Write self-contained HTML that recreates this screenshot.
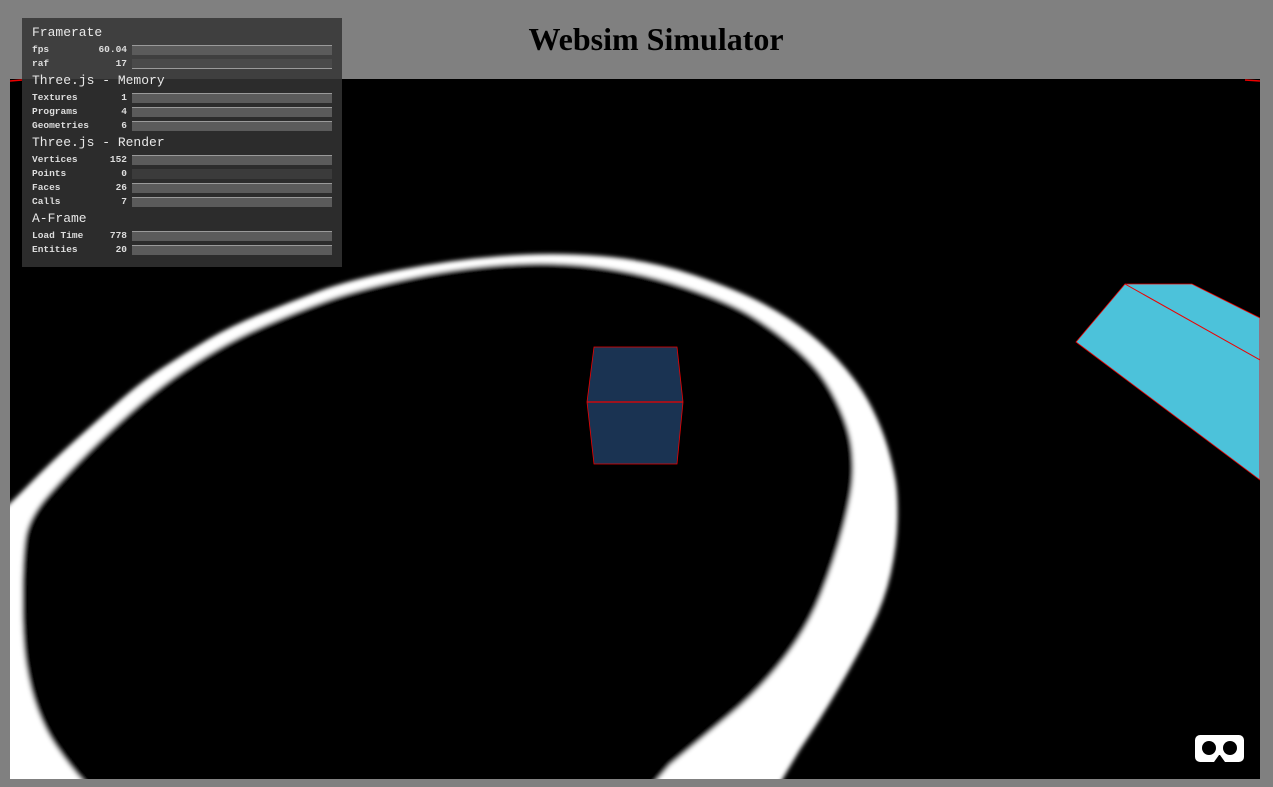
<!DOCTYPE html>
<html><head><meta charset="utf-8"><style>
html,body{margin:0;padding:0;width:1273px;height:787px;background:#808080;overflow:hidden;position:relative}
h1{position:absolute;left:0;width:1312px;top:20px;margin:0;text-align:center;font:bold 32px "Liberation Serif",serif;color:#000;line-height:38px}
#scene{position:absolute;left:0;top:0}
#stats{position:absolute;left:22px;top:18px;width:320px;height:249px;background:#2c2c2c;font-family:"Liberation Mono","Courier New",monospace;color:#ddd}
#stats .top{position:absolute;left:0;top:0;width:320px;height:61px;background:#3f3f3f}
.h{position:absolute;left:10px;font-size:13px;color:#e8e8e8}
.r{position:absolute;left:10px;width:310px;height:10px;font-size:9.5px;font-weight:bold;line-height:10px}
.r .l{position:absolute;left:0}
.r .v{position:absolute;right:215px}
.r .b{position:absolute;left:100px;width:200px;height:9px;top:0;background:#5b5b5b;border-top:1px solid #9a9a9a}
.r .b.d{background:#3b3b3b;border-top-color:#3b3b3b}
</style></head><body>
<svg id="scene" width="1273" height="787">
<rect x="10" y="79" width="1250" height="700" fill="#000"/>
<line x1="1245" y1="80" x2="1260" y2="81" stroke="#e00" stroke-width="1.5"/>
<line x1="10" y1="81" x2="22" y2="80" stroke="#e00" stroke-width="1.5"/>
<defs><clipPath id="c"><rect x="10" y="79" width="1250" height="700"/></clipPath>
<filter id="bl" x="-10%" y="-10%" width="120%" height="120%"><feGaussianBlur stdDeviation="2.2"/></filter></defs>
<g clip-path="url(#c)">
<g filter="url(#bl)">
<path fill="#fff" d="M-1,513 Q8,506 29.5,484 Q51,462 75.5,440 Q100,418 120.5,400 Q141,382 163,367.5 Q185,353 208,339.5 Q231,326 260.5,314 Q290,302 319.5,291 Q349,280 399.5,270 Q450,260 501,256 Q552,252 601,256 Q650,260 694,275 Q738,290 764,304 Q790,318 810,334 Q830,350 846,369 Q862,388 872,408 Q882,428 887.5,446.5 Q893,465 895.5,480 Q898,495 897.5,520 Q897,545 891,572.5 Q885,600 871.5,627.5 Q858,655 839,687.5 Q820,720 800,749.5 L770,800 L-20,800 Z"/>
<path fill="#000" d="M640,800 L670,765 Q700,740 730,715 Q760,690 784,659 Q808,628 821.5,594 Q835,560 843.5,527.5 Q852,495 853,477.5 Q854,460 851.5,444 Q849,428 840.5,409 Q832,390 822,376 Q812,362 793.5,346 Q775,330 752.5,316 Q730,302 685,287 Q640,272 596,266.5 Q552,261 503.5,264.5 Q455,268 405,279 Q355,290 325,301 Q295,312 267.5,324 Q240,336 217.5,349 Q195,362 174,377 Q153,392 130.5,412 Q108,432 87.5,452.5 Q67,473 47.5,495.5 Q28,518 25,539 Q22,560 22,600 Q22,640 26,665 Q30,690 37.5,710 Q45,730 55,745 Q65,760 77.5,775 L100,800 Z"/>
</g>
<polygon points="1076,342 1125,284 1192,284 1260,318 1260,480" fill="#4cc2da" stroke="#e00" stroke-width="0.8"/>
<line x1="1125" y1="284" x2="1260" y2="360" stroke="#e00" stroke-width="1"/>
<polygon points="594,347 677,347 683,402 677,464 594,464 587,402" fill="#1a3352" stroke="#e00" stroke-width="0.8"/>
<line x1="587" y1="402" x2="683" y2="402" stroke="#e00" stroke-width="1.2"/>
</g>
<g>
<rect x="1195" y="735" width="49" height="27" rx="5" fill="#fff"/>
<circle cx="1209" cy="748" r="7" fill="#000"/>
<circle cx="1230" cy="748" r="7" fill="#000"/>
<path d="M1214,762 L1219,755 L1220,755 L1225,762 Z" fill="#000"/>
</g>
</svg>
<h1>Websim Simulator</h1>
<div id="stats">
<div class="top"></div>
<div class="h" style="top:7px">Framerate</div>
<div class="r" style="top:27px"><span class="l">fps</span><span class="v">60.04</span><span class="b"></span></div>
<div class="r" style="top:41px"><span class="l">raf</span><span class="v">17</span><span class="b d" style="border-top:none;border-bottom:1px solid #9a9a9a;background:#4a4a4a"></span></div>
<div class="h" style="top:55px">Three.js - Memory</div>
<div class="r" style="top:75px"><span class="l">Textures</span><span class="v">1</span><span class="b"></span></div>
<div class="r" style="top:89px"><span class="l">Programs</span><span class="v">4</span><span class="b"></span></div>
<div class="r" style="top:103px"><span class="l">Geometries</span><span class="v">6</span><span class="b"></span></div>
<div class="h" style="top:117px">Three.js - Render</div>
<div class="r" style="top:137px"><span class="l">Vertices</span><span class="v">152</span><span class="b"></span></div>
<div class="r" style="top:151px"><span class="l">Points</span><span class="v">0</span><span class="b d"></span></div>
<div class="r" style="top:165px"><span class="l">Faces</span><span class="v">26</span><span class="b"></span></div>
<div class="r" style="top:179px"><span class="l">Calls</span><span class="v">7</span><span class="b"></span></div>
<div class="h" style="top:193px">A-Frame</div>
<div class="r" style="top:213px"><span class="l">Load Time</span><span class="v">778</span><span class="b"></span></div>
<div class="r" style="top:227px"><span class="l">Entities</span><span class="v">20</span><span class="b"></span></div>
</div>
</body></html>
